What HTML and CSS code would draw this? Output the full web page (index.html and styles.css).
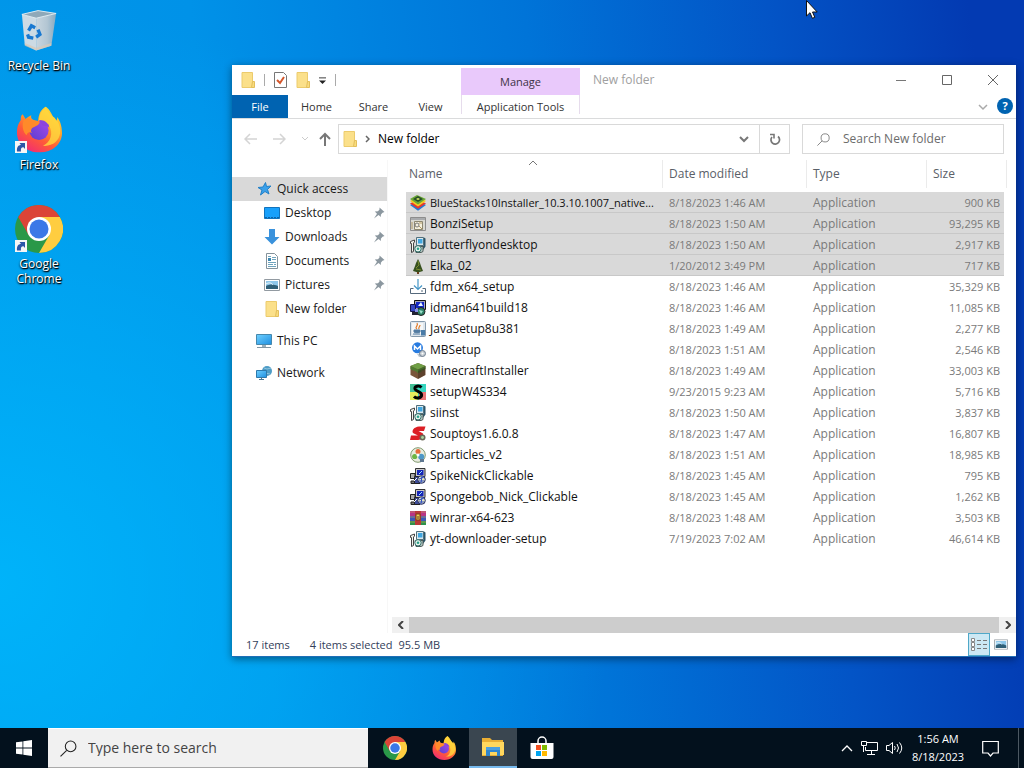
FILE: index.html
```html
<!DOCTYPE html>
<html lang="en">
<head>
<meta charset="utf-8">
<title>New folder</title>
<link rel="stylesheet" href="styles.css">
</head>
<body>
<svg class="sprite" aria-hidden="true">
  <linearGradient id="fx-body" x1="0.8" y1="0" x2="0.2" y2="1"><stop offset="0" stop-color="#ffe43a"/><stop offset=".35" stop-color="#ffa52c"/><stop offset=".65" stop-color="#ff5a38"/><stop offset="1" stop-color="#f0277a"/></linearGradient>
  <linearGradient id="fx-globe" x1="1" y1="0" x2="0" y2="1"><stop offset="0" stop-color="#a548ea"/><stop offset="1" stop-color="#5a3fd0"/></linearGradient>
  <linearGradient id="bin-side" x1="0" y1="0" x2="1" y2="0"><stop offset="0" stop-color="#c9d6df"/><stop offset=".55" stop-color="#b3c6d3"/><stop offset="1" stop-color="#86aac2"/></linearGradient>
  <linearGradient id="screen" x1="0" y1="0" x2="1" y2="1"><stop offset="0" stop-color="#6fd0ff"/><stop offset="1" stop-color="#1f8fe0"/></linearGradient>
  <symbol id="chrome" viewBox="0 0 48 48">
    <circle cx="24" cy="24" r="24" fill="#2a9848"/>
    <path d="M44.800 12H24v12l10.400 6L24 48A24 24 0 0 0 44.800 12Z" fill="#ffcd40"/>
    <path d="M3.200 12A24 24 0 0 1 44.800 12H24L13.600 30Z" fill="#db4437"/>
    <circle cx="24" cy="24" r="12" fill="#fff"/><circle cx="24" cy="24" r="9.500" fill="#3b78e7"/>
  </symbol>
  <symbol id="firefox" viewBox="0 0 48 48">
    <path d="M31 0c5 4 6 8 8 11 1 0 2 2 3 4 1-1 1-3 1-4 4 5 5 12 5 17 0 11-10 20-23 20C11 48 1 39 1 27c0-5 1-9 4-13 0-3 0-5 2-6l3 5c2-2 4-3 6-4-1 3 1 5 4 6h3c1-7 2-11 8-15Z" fill="url(#fx-body)"/>
    <path d="M31 1c-5 4-7 8-7 14 9 1 15 8 12 17-1 4-4 7-8 9 10 1 17-5 18-13 1-7-2-13-7-17-3-3-6-6-8-10Z" fill="#ffd83e" opacity=".8"/>
    <circle cx="24" cy="25" r="10" fill="url(#fx-globe)"/>
    <path d="M24 14c4 0 7 1 9 4 2 1 1 3 2 4-3-2-5-2-7-2Z" fill="#8b45dd"/>
    <path d="M8 14c5-3 8 0 15 1 2 0 2 2 1 3-2 3-7 3-8 6-1 2 0 3 1 4-3-2-5-1-6 2-4-4-5-10-3-16Z" fill="#ff8a2a"/>
  </symbol>
  <symbol id="shortcut" viewBox="0 0 12 12"><rect width="12" height="12" fill="#f6f6f6"/><path d="M2 10.500C1.500 6 3.500 4 6 4L4.500 2H10v6L8.500 6.200C6.500 6 5.500 7.500 6 10.500Z" fill="#2b56a8"/></symbol>
  <symbol id="folder" viewBox="0 0 14 16"><path d="M1 .5h10.500v15H1z" fill="#fbe08a" stroke="#eccb6c"/><path d="M11.500 9.500h2v6h-3z" fill="#f9dc7c" stroke="#e3bf5c"/></symbol>
  <symbol id="inno" viewBox="0 0 16 16"><path d="M6.500.500h7v8h-7z" fill="#dbe8ee" stroke="#52707c"/><path d="M8 2h4.500v4.500H8z" fill="#3fa6e0"/><path d="m14 .500 1.500 1v8L13 13V9l1-.500Z" fill="#2b5468"/><path d="M5 9.500h8v5l-2 1H6z" fill="#c2cfcc" stroke="#4d5d5b"/><path d="M.500 4.500 4.500 3v2l-1 1v8.500l-2 1v-9h-1Z" fill="#f4f4ee" stroke="#454545"/><circle cx="8" cy="11.800" r="3.200" fill="#e6f4ec" stroke="#2f6b68"/><circle cx="8" cy="11.800" r="1.300" fill="#29a18a"/></symbol>
  <symbol id="nick" viewBox="0 0 16 16"><path d="M5.500.500h9.500v8H5.500z" fill="#c8c8c8" stroke="#333"/><path d="M7 2h6.500v5H7z" fill="#1424b8"/><path d="m9 6 3-3" stroke="#9fe6ff"/><path d="M.500 5.500H5v5H.500z" fill="#aaa" stroke="#202020"/><path d="M1 13h5v2.500H1z" fill="#777" stroke="#202020"/><path d="M4.500 8.500H10v7H4.500z" fill="#3d4c97" stroke="#222"/><circle cx="11.500" cy="11.500" r="3.800" fill="#dfe2c0" stroke="#1c2562"/><path d="m9 11 5-2M11 15l1-7M9 13l5 0" stroke="#2c4ac0"/><path d="m4 13 3-3" stroke="#fff"/></symbol>
  <symbol id="bluestacks" viewBox="0 0 16 16"><path d="m0 10 8-4 8 4-8 5.800Z" fill="#247ad4"/><path d="m0 8.500 8-4 8 4-8 5.300Z" fill="#e5382f"/><path d="m0 6 8-4.500L16 6l-8 5.500Z" fill="#f6cc23"/><path d="m0 4 7-4 9 4-8 5.500Z" fill="#6aa834"/><path d="m3 4 5-3 5 3-5 3Z" fill="#284f28"/><path d="m6 4 2-1 2 1-2 1Z" fill="#e1ef6a"/></symbol>
  <symbol id="bonzi" viewBox="0 0 16 16"><path d="M.500 1.500h15v13H.500z" fill="#d9d9d2" stroke="#8d8d8d"/><path d="M1 2h14v2H1z" fill="#a9abad"/><path d="M4.500 5.500h8v8h-8z" fill="#f5f0dc" stroke="#8c8770"/><circle cx="7" cy="9" r="2" fill="none" stroke="#777"/><path d="m9 10 3 3M9 7h3M2 6v7" stroke="#b09a68"/></symbol>
  <symbol id="elka" viewBox="0 0 16 16"><path d="m8 1 2 4 1 3 2 5-5 1.500L3 13l2-5 1-3Z" fill="#37501f"/><path d="m8 3 1 4-3 3M6 11l5 1" stroke="#7c8c2f" fill="none"/><path d="M7 14h2v2H7z" fill="#6a3e1d"/></symbol>
  <symbol id="fdm" viewBox="0 0 16 16"><path d="M3.500 9.500h-3v5h15v-5h-3" fill="none" stroke="#55697c"/><path d="M8 0v10M4 6.500l4 4 4-4" fill="none" stroke="#4596c6" stroke-width="1.200"/><path d="M11 12h2" stroke="#55697c"/></symbol>
  <symbol id="idman" viewBox="0 0 16 16"><path d="M4.500.500h11v9h-11z" fill="#aab" stroke="#111"/><path d="M6 2h8v6H6z" fill="#1428c4"/><path d="m8 6 3-4 2 4Z" fill="#e8f4ff"/><path d="M.500 4.500h5v7h-5z" fill="#3748c0" stroke="#15154d"/><path d="M2 12h6v3H2z" fill="#223" /><circle cx="11" cy="11.500" r="4" fill="#2d7f66" stroke="#222"/><path d="m9 10 4 1-2 3Z" fill="#9ae0ca"/><path d="M5 9h3v3H5z" fill="#8890e8"/></symbol>
  <symbol id="java" viewBox="0 0 16 16"><rect x=".500" y=".500" width="15" height="15" rx="1" fill="#dfe6ec" stroke="#8499ac"/><path d="M2 2h11v11H2z" fill="#f5f7f8"/><path d="M7 8c-3-2 2-3 0-6M9 8c-1-2 1-2 1-4" fill="none" stroke="#e17926" stroke-width="1.200"/><path d="M4 9h6v2c0 1-6 1-6 0ZM3 13h7" fill="#527ba1" stroke="#527ba1"/><path d="M11 9h4v5.500h-4z" fill="#4a7ca8"/></symbol>
  <symbol id="mb" viewBox="0 0 16 16"><circle cx="7.500" cy="5.800" r="5.500" fill="#277be0"/><path d="M4.500 8V4l3 3 3-3v4" fill="none" stroke="#fff" stroke-width="1.500"/><path d="M7 12h6v3H9z" fill="#bec8d1"/><circle cx="12.500" cy="11.500" r="3" fill="#c5ccd2" stroke="#718092"/><circle cx="12.500" cy="11.500" r="1" fill="#fff"/></symbol>
  <symbol id="minecraft" viewBox="0 0 16 16"><path d="m8 0 7.500 3v9L8 16 .500 12V3Z" fill="#79553a"/><path d="m8 0 7.500 3L8 6.500.500 3Z" fill="#6f9f45"/><path d="M.500 3 8 6.500v4L6 8v1L4 7v1L.500 6Z" fill="#4f7c31"/><path d="M8 6.500 15.500 3v3l-2 1v1l-2-1v2L8 10Z" fill="#426a2b"/><path d="m8 8 7-3v7l-7 4Z" fill="#342319" opacity=".4"/></symbol>
  <symbol id="setup-s" viewBox="0 0 16 16"><path d="M0 0h16v16H0z" fill="#37d6c0"/><path d="M0 0h8v8H0z" fill="#43bf96"/><path d="M0 8h8v8H0z" fill="#e6ec5c"/><path d="M9 8h7v8H9z" fill="#eb7374"/><path d="M11.500 3.500C9 1 4.500 2 5 5c.500 2.500 6 2.500 6.500 5.500.5 3.500-5 4.500-7.500 2" fill="none" stroke="#000" stroke-width="3"/></symbol>
  <symbol id="soup" viewBox="0 0 16 16"><path d="M15.500.500H9C4 1 1.500 4.500 3 7l5 2.500H1L0 14h8c4 0 6-4 5-6.500L8.500 5H14Z" fill="#dc1f25"/><circle cx="12.500" cy="11.500" r="3" fill="#6b6758"/><circle cx="12.500" cy="11.500" r="1.400" fill="#a9d49d"/></symbol>
  <symbol id="spart" viewBox="0 0 16 16"><circle cx="8" cy="8" r="7.300" fill="#e8ecdf" stroke="#81996f"/><circle cx="8" cy="4.500" r="2.500" fill="#e76a39"/><circle cx="4.700" cy="9.500" r="2.600" fill="#6bb545"/><circle cx="11.200" cy="9.700" r="3" fill="#4d97c7"/><circle cx="8" cy="8" r="1.500" fill="#fff"/><path d="M10 12h4v3h-4z" fill="#5e7791"/></symbol>
  <symbol id="winrar" viewBox="0 0 16 16"><path d="M0 1h16v5H0z" fill="#b73586"/><path d="M0 6h16v5H0z" fill="#3c57b7"/><path d="M0 11h16v4H0z" fill="#2e914c"/><path d="M0 2h16M0 7h16M0 12h16" stroke="#d9a651" stroke-width=".600"/><path d="M5 1h6v14H5z" fill="#b93838"/><path d="M6 4h4v6H6z" fill="#efce53" stroke="#743e1d"/><path d="M8 6v3" stroke="#5f3f20"/></symbol>
  <symbol id="pin" viewBox="0 0 12 12"><path d="M6.500.500 11.500 5l-2 .700-1.700 2 .2 2.300L5.500 8 1 11.500 4 6.700 1.800 4.500 5 4.200l1.500-1.700Z" fill="#8b979f"/></symbol>
  <symbol id="picture" viewBox="0 0 16 12"><path d="M.500.500h15v11H.500z" fill="#fff" stroke="#929aa1"/><path d="M2 2h12v8H2z" fill="#8ec7ea"/><path d="M2 7c4-2 7-2 12 0v3H2z" fill="#2f5f77"/><path d="M2 5c3-2 6-1 7 1" stroke="#eef8fc" fill="none"/></symbol>
  <symbol id="lens" viewBox="0 0 16 16"><circle cx="10" cy="6" r="5" fill="none" stroke="currentColor"/><path d="M6.300 9.700.500 15.500" stroke="currentColor"/></symbol>
</svg>

<main class="desktop">
  <nav class="shortcuts" aria-label="Desktop">
    <a class="shortcut" href="#bin"><span class="shortcut-art"><svg class="bin" width="38" height="43" viewBox="0 0 40 44"><path d="m2 4 15 3v35L5 36Z" fill="#cddbe4"/><path d="M17 7 38 3l-5 34-16 5Z" fill="url(#bin-side)"/><path d="M2 4 19 0l19 3-21 5Z" fill="#8fa9b9" stroke="#e2ecf1"/><path d="m5 34 12 5v3L5 37ZM17 39l16-5v3l-16 5Z" fill="#d9c9b7" opacity=".7"/><g fill="none" stroke="#1979d1" stroke-width="3.500"><path d="m9 21 3-5 4 2M19 20l2 5-4 3M14 29l-5-1-1-3"/></g></svg></span><span>Recycle Bin</span></a>
    <a class="shortcut" href="#firefox"><span class="shortcut-art"><svg width="46" height="47" viewBox="0 0 48 48"><use href="#firefox"/></svg><svg class="badge" width="12" height="12"><use href="#shortcut"/></svg></span><span>Firefox</span></a>
    <a class="shortcut" href="#chrome"><span class="shortcut-art"><svg width="48" height="48"><use href="#chrome"/></svg><svg class="badge" width="12" height="12"><use href="#shortcut"/></svg></span><span>Google Chrome</span></a>
  </nav>

  <section class="window" aria-label="New folder">
    <header class="titlebar">
      <div class="quick">
        <svg width="14" height="16"><use href="#folder"/></svg><i class="bar"></i>
        <button aria-label="Properties"><svg width="13" height="16" viewBox="0 0 13 16"><path d="M.500.500h9l3 3v12H.500z" fill="#fff" stroke="#777"/><path d="m3 8 3 3 4-6" fill="none" stroke="#d4562b" stroke-width="2"/></svg></button>
        <button aria-label="New folder"><svg width="14" height="16"><use href="#folder"/></svg></button>
        <button aria-label="Customize toolbar"><svg width="7" height="7" viewBox="0 0 8 8"><path d="M0 1h8" stroke="#222"/><path d="M0 4h8L4 8Z" fill="#222"/></svg></button><i class="bar"></i>
      </div>
      <div class="context">Manage</div>
      <h1 class="title">New folder</h1>
      <div class="controls">
        <button aria-label="Minimize"><svg width="12" height="12" viewBox="0 0 12 12"><path d="M1 6.500h10" stroke="#777"/></svg></button>
        <button aria-label="Maximize"><svg width="12" height="12" viewBox="0 0 12 12"><path d="M1.500 1.500h9v9h-9z" fill="none" stroke="#666"/></svg></button>
        <button aria-label="Close"><svg width="12" height="12" viewBox="0 0 12 12"><path d="m1 1 10 10M11 1 1 11" stroke="#666"/></svg></button>
      </div>
    </header>
    <div class="tabs">
      <button class="tab tab-file">File</button><button class="tab">Home</button><button class="tab">Share</button><button class="tab">View</button><button class="tab tab-context">Application Tools</button>
      <span class="grow"></span>
      <button class="expand" aria-label="Expand ribbon"><svg width="10" height="8" viewBox="0 0 10 8"><path d="m1 2 4 4 4-4" fill="none" stroke="#aaa" stroke-width="1.500"/></svg></button>
      <button class="help">?</button>
    </div>
    <div class="nav">
      <div class="arrows">
        <button aria-label="Back"><svg width="13" height="12" viewBox="0 0 13 12"><path d="M13 6H1m5-5L1 6l5 5" fill="none" stroke="#d4d4d4" stroke-width="1.500"/></svg></button>
        <button aria-label="Forward"><svg width="13" height="12" viewBox="0 0 13 12"><path d="M0 6h12M7 1l5 5-5 5" fill="none" stroke="#d4d4d4" stroke-width="1.500"/></svg></button>
        <button aria-label="Recent"><svg width="6" height="4" viewBox="0 0 6 4"><path d="m0 0 3 3 3-3" fill="none" stroke="#ccc"/></svg></button>
        <button aria-label="Up"><svg width="12" height="14" viewBox="0 0 12 14"><path d="M6 14V2M1 7l5-5 5 5" fill="none" stroke="#777" stroke-width="2"/></svg></button>
      </div>
      <div class="address">
        <svg width="14" height="16"><use href="#folder"/></svg>
        <svg width="5" height="8" viewBox="0 0 5 8"><path d="m1 1 3 3-3 3" fill="none" stroke="#666" stroke-width="1.500"/></svg>
        <span class="grow">New folder</span>
        <button class="drop" aria-label="History"><svg width="10" height="8" viewBox="0 0 10 8"><path d="m1 2 4 4 4-4" fill="none" stroke="#777" stroke-width="2"/></svg></button>
        <button class="refresh" aria-label="Refresh"><svg width="12" height="13" viewBox="0 0 12 13"><path d="M9 3.500A4.300 4.300 0 1 1 3 4" fill="none" stroke="#777" stroke-width="1.700"/><path d="M1 1.500h4v4" fill="none" stroke="#777" stroke-width="1.600"/></svg></button>
      </div>
      <label class="find"><svg width="13" height="13"><use href="#lens"/></svg><input type="search" placeholder="Search New folder" aria-label="Search New folder"></label>
    </div>
    <div class="body">
      <nav class="side" aria-label="Folders">
        <a class="place top current" href="#quick"><svg width="16" height="16" viewBox="0 0 16 16"><path d="m9.500 1.500 1 4 4.500-.500-3.500 3.500 1.500 4.500-4-2.500-4.500 3.500 1.500-5L2 6.500l5-.500Z" fill="#3aa0ea" stroke="#2180c8"/></svg>Quick access</a>
        <a class="place" href="#desktop"><svg width="16" height="12" viewBox="0 0 16 12"><path d="M.500.500h15v11H.500z" fill="#18a0fb" stroke="#1173bd"/><path d="M1 10.500h14" stroke="#0b64aa" stroke-dasharray="2 1"/></svg>Desktop<svg class="pin" width="12" height="12"><use href="#pin"/></svg></a>
        <a class="place" href="#downloads"><svg width="16" height="16" viewBox="0 0 16 16"><path d="M5 0h6v8h4.500L8 15.500.500 8H5Z" fill="#3a92dc"/></svg>Downloads<svg class="pin" width="12" height="12"><use href="#pin"/></svg></a>
        <a class="place" href="#documents"><svg width="16" height="16" viewBox="0 0 16 16"><path d="M2.500.500h8l3 3v12h-11z" fill="#fff" stroke="#84929b"/><path d="M8 4.500h4M8 6.500h4M4 9.500h8M4 11.500h5M10 11.500h2M4 13.500h8M4 3.500h3" stroke="#6fa4bd"/><path d="M4 5h3v3H4z" fill="#3b87b3"/></svg>Documents<svg class="pin" width="12" height="12"><use href="#pin"/></svg></a>
        <a class="place" href="#pictures"><svg width="16" height="12"><use href="#picture"/></svg>Pictures<svg class="pin" width="12" height="12"><use href="#pin"/></svg></a>
        <a class="place" href="#folder"><svg width="16" height="16"><use href="#folder"/></svg>New folder</a>
        <a class="place top apart" href="#pc"><svg width="16" height="16" viewBox="0 0 16 16"><path d="M.500 1.500h15v10H.500z" fill="url(#screen)" stroke="#4688ad"/><path d="M6 12h4v2H6z" fill="#9bafbb"/><path d="M1 14.500h14" stroke="#8297a3"/></svg>This PC</a>
        <a class="place top apart" href="#network"><svg width="16" height="16" viewBox="0 0 16 16"><circle cx="11" cy="6" r="5" fill="#4e9cc6"/><path d="m8 3 3 1 4-1M9 8l5 1" stroke="#8fc4de" fill="none"/><path d="M.500 5.500h10v7H.500z" fill="url(#screen)" stroke="#2d79ac"/><path d="M3 14.500h5M5.500 12v2" stroke="#4a7894"/></svg>Network</a>
      </nav>
      <div class="content">
        <svg class="sort" width="10" height="6" viewBox="0 0 10 6"><path d="m1 5 4-4 4 4" fill="none" stroke="#777"/></svg>
        <table class="files">
          <colgroup><col><col class="c-date"><col class="c-type"><col class="c-size"></colgroup>
          <thead><tr><th>Name</th><th>Date modified</th><th>Type</th><th>Size</th></tr></thead>
          <tbody>
            <tr class="picked"><td><span class="name small"><svg><use href="#bluestacks"/></svg>BlueStacks10Installer_10.3.10.1007_native...</span></td><td>8/18/2023 1:46 AM</td><td>Application</td><td>900 KB</td></tr>
            <tr class="picked"><td><span class="name"><svg><use href="#bonzi"/></svg>BonziSetup</span></td><td>8/18/2023 1:50 AM</td><td>Application</td><td>93,295 KB</td></tr>
            <tr class="picked"><td><span class="name"><svg><use href="#inno"/></svg>butterflyondesktop</span></td><td>8/18/2023 1:50 AM</td><td>Application</td><td>2,917 KB</td></tr>
            <tr class="picked"><td><span class="name"><svg><use href="#elka"/></svg>Elka_02</span></td><td>1/20/2012 3:49 PM</td><td>Application</td><td>717 KB</td></tr>
            <tr><td><span class="name"><svg><use href="#fdm"/></svg>fdm_x64_setup</span></td><td>8/18/2023 1:46 AM</td><td>Application</td><td>35,329 KB</td></tr>
            <tr><td><span class="name"><svg><use href="#idman"/></svg>idman641build18</span></td><td>8/18/2023 1:46 AM</td><td>Application</td><td>11,085 KB</td></tr>
            <tr><td><span class="name"><svg><use href="#java"/></svg>JavaSetup8u381</span></td><td>8/18/2023 1:49 AM</td><td>Application</td><td>2,277 KB</td></tr>
            <tr><td><span class="name"><svg><use href="#mb"/></svg>MBSetup</span></td><td>8/18/2023 1:51 AM</td><td>Application</td><td>2,546 KB</td></tr>
            <tr><td><span class="name"><svg><use href="#minecraft"/></svg>MinecraftInstaller</span></td><td>8/18/2023 1:49 AM</td><td>Application</td><td>33,003 KB</td></tr>
            <tr><td><span class="name"><svg><use href="#setup-s"/></svg>setupW4S334</span></td><td>9/23/2015 9:23 AM</td><td>Application</td><td>5,716 KB</td></tr>
            <tr><td><span class="name"><svg><use href="#inno"/></svg>siinst</span></td><td>8/18/2023 1:50 AM</td><td>Application</td><td>3,837 KB</td></tr>
            <tr><td><span class="name"><svg><use href="#soup"/></svg>Souptoys1.6.0.8</span></td><td>8/18/2023 1:47 AM</td><td>Application</td><td>16,807 KB</td></tr>
            <tr><td><span class="name"><svg><use href="#spart"/></svg>Sparticles_v2</span></td><td>8/18/2023 1:51 AM</td><td>Application</td><td>18,985 KB</td></tr>
            <tr><td><span class="name"><svg><use href="#nick"/></svg>SpikeNickClickable</span></td><td>8/18/2023 1:45 AM</td><td>Application</td><td>795 KB</td></tr>
            <tr><td><span class="name"><svg><use href="#nick"/></svg>Spongebob_Nick_Clickable</span></td><td>8/18/2023 1:45 AM</td><td>Application</td><td>1,262 KB</td></tr>
            <tr><td><span class="name"><svg><use href="#winrar"/></svg>winrar-x64-623</span></td><td>8/18/2023 1:48 AM</td><td>Application</td><td>3,503 KB</td></tr>
            <tr><td><span class="name"><svg><use href="#inno"/></svg>yt-downloader-setup</span></td><td>7/19/2023 7:02 AM</td><td>Application</td><td>46,614 KB</td></tr>
          </tbody>
        </table>
        <div class="scroll">
          <button aria-label="Scroll left"><svg width="6" height="8" viewBox="0 0 6 8"><path d="M5 0 1 4l4 4" fill="none" stroke="#444" stroke-width="2"/></svg></button>
          <span class="thumb"></span>
          <button aria-label="Scroll right"><svg width="6" height="8" viewBox="0 0 6 8"><path d="m1 0 4 4-4 4" fill="none" stroke="#444" stroke-width="2"/></svg></button>
        </div>
      </div>
    </div>
    <footer class="status">
      <span class="count">17 items</span><span>4 items selected</span><span>95.5 MB</span><span class="grow"></span>
      <div class="views">
        <button class="view on" aria-label="Details"><svg width="16" height="13" viewBox="0 0 16 13"><path d="M.500.500h3v3h-3zM.500 4.500h3v4h-3zM.500 9.500h3v3h-3z" fill="#fff" stroke="#888"/><path d="M6 2.500h10M6 6.500h10M6 10.500h10" stroke="#777" stroke-dasharray="4 2"/></svg></button>
        <button class="view" aria-label="Large icons"><svg width="14" height="11" viewBox="0 0 16 12"><use href="#picture"/></svg></button>
      </div>
    </footer>
  </section>
  <svg class="cursor" width="12" height="19" viewBox="0 0 12 19"><path d="M.500.500v15.500L4 12.700l2.400 5.600 2.400-1L6.500 12h4.700Z" fill="#fff" stroke="#111"/></svg>
</main>

<footer class="taskbar">
  <button class="task" aria-label="Start"><svg width="16" height="16" viewBox="0 0 16 16" fill="#fff"><path d="m0 2.300 6.500-.900v6.200H0zM7.300 1.300 16 0v7.600H7.300zM0 8.400h6.500v6.200L0 13.700zM7.300 8.400H16V16l-8.700-1.200z"/></svg></button>
  <label class="task-search"><svg width="17" height="17" viewBox="0 0 16 16"><use href="#lens"/></svg><input type="search" placeholder="Type here to search" aria-label="Type here to search"></label>
  <div class="apps">
    <button class="task" aria-label="Google Chrome"><svg width="24" height="24"><use href="#chrome"/></svg></button>
    <button class="task" aria-label="Firefox"><svg width="24" height="24"><use href="#firefox"/></svg></button>
    <button class="task active" aria-label="File Explorer"><svg width="22" height="20" viewBox="0 0 22 20"><path d="M0 1h8l2 2h11v16H0z" fill="#e9ae34"/><path d="M0 5h22v13H0z" fill="#ffd75e"/><path d="M4 10h14v9h-3v-4H8v4H4z" fill="#2f86cf"/><path d="M4 10h14v3H4z" fill="#4b9fdf"/></svg></button>
    <button class="task" aria-label="Microsoft Store"><svg width="24" height="24" viewBox="0 0 24 24"><path d="M8 7V5a4 4 0 0 1 8 0v2" fill="none" stroke="#fff" stroke-width="1.500"/><path d="M.500 7h23v14a2 2 0 0 1-2 2h-19a2 2 0 0 1-2-2z" fill="#fff"/><path d="M6 9h5v5H6z" fill="#f25022"/><path d="M12 9h5v5h-5z" fill="#7fba00"/><path d="M6 15h5v5H6z" fill="#00a4ef"/><path d="M12 15h5v5h-5z" fill="#ffb900"/></svg></button>
  </div>
  <span class="grow"></span>
  <div class="tray">
    <button aria-label="Show hidden icons"><svg width="12" height="8" viewBox="0 0 12 8"><path d="m1 7 5-5 5 5" fill="none" stroke="#fff" stroke-width="1.300"/></svg></button>
    <button aria-label="Network"><svg width="17" height="14" viewBox="0 0 17 14" fill="none" stroke="#fff"><path d="M6 1.500h10.500v8H4.500V6"/><path d="M.500.500h5v4h-5zM2.500 5v6M10.500 10v3M6 13.500h8"/></svg></button>
    <button aria-label="Volume"><svg width="17" height="14" viewBox="0 0 17 14" fill="none" stroke="#fff"><path d="M.500 4.500h2.500l3.500-3v11L3 9.500H.500z"/><path d="M8.500 5q1.500 2 0 4M11 3q3 4 0 8M13.500 1.500q4.500 5.500 0 11"/></svg></button>
  </div>
  <button class="clock"><time>1:56 AM</time><time>8/18/2023</time></button>
  <button class="notes" aria-label="Notifications"><svg width="17" height="17" viewBox="0 0 17 17"><path d="M.700 1.500h15.600v11.500H11l-2.500 3L6 13H.700z" fill="none" stroke="#fff" stroke-width="1.200"/></svg></button>
  <button class="peek" aria-label="Show desktop"></button>
</footer>
</body>
</html>
```
FILE: styles.css
```css
* { box-sizing: border-box; }
body {
  margin: 0;
  min-height: 100vh;
  display: flex;
  flex-direction: column;
  font: 12px/16px "Open Sans", "Noto Sans", sans-serif;
  color: #1a1a1a;
  background: #0078d7;
}
button { margin: 0; padding: 0; border: 0; background: none; font: inherit; color: inherit; display: flex; align-items: center; justify-content: center; }
a { color: inherit; text-decoration: none; }
input { min-width: 0; flex: 1; padding: 0; border: 0; outline: 0; background: none; font: inherit; color: inherit; }
input::placeholder { color: inherit; opacity: 1; }
svg { flex: none; display: block; }
.sprite { position: absolute; width: 0; height: 0; }
.grow { flex: 1; }
.small { font-size: 11px; }

.desktop {
  position: relative;
  flex: 1;
  background:
    radial-gradient(ellipse 60% 80% at 0% 80%, rgba(0, 188, 255, 0.75), rgba(0, 170, 255, 0) 100%),
    linear-gradient(83deg, #0098ea 0%, #0092e8 25%, #0074d8 55%, #0354c6 77%, #033ab2 95%);
}
.shortcuts { width: 78px; padding-top: 7px; display: grid; grid-auto-rows: 99px; }
.shortcut { display: flex; flex-direction: column; align-items: center; text-align: center; line-height: 15px; color: #fff; text-shadow: 0 1px 2px #000, 1px 1px 1px #000; }
.shortcut-art { position: relative; width: 48px; height: 51px; display: flex; align-items: start; justify-content: center; }
.bin { margin-top: 3px; }
.badge { position: absolute; left: 0; bottom: 4px; }

.window {
  position: absolute;
  left: 232px;
  right: 8px;
  top: 65px;
  bottom: 71px;
  display: flex;
  flex-direction: column;
  background: #fff;
  border: 1px solid #1f6fb8;
  border-width: 0 0 1px;
  box-shadow: 0 2px 8px rgba(0, 0, 0, 0.45);
}
.titlebar { display: flex; height: 30px; align-items: center; }
.quick { width: 229px; padding-left: 9px; display: flex; align-items: center; gap: 9px; }
.bar { width: 1px; height: 12px; background: #aaa; }
.context { width: 119px; align-self: end; height: 27px; display: grid; place-items: center; background: #e9c9fb; color: #3d3346; font-size: 11px; }
.title { flex: 1; margin: 0; padding-left: 13px; font-size: 12px; font-weight: 400; color: #a0a0a0; }
.controls { display: flex; align-self: stretch; }
.controls button { width: 46px; }
.tabs { display: flex; height: 24px; border-bottom: 1px solid #dadbdc; color: #333; font-size: 11px; }
.tab { width: 57px; }
.tab-file { width: 56px; background: #0063b1; color: #fff; }
.tab-context { width: 119px; margin: 0 0 4px 2px; padding-top: 4px; border: 1px solid #e6dcec; border-width: 0 1px; }
.expand { width: 24px; }
.help { width: 16px; height: 16px; margin: 3px 3px 0 2px; border-radius: 50%; background: #0063b1; color: #fff; font-weight: 700; }
.nav { display: flex; align-items: center; padding: 5px 12px 6px; }
.arrows { width: 94px; display: flex; align-items: center; gap: 16px; }
.arrows button:last-child { margin-left: -5px; }
.address { flex: 1; height: 30px; padding-left: 4px; display: flex; align-items: center; gap: 8px; border: 1px solid #d9d9d9; color: #000; }
.drop { width: 14px; }
.refresh { width: 30px; align-self: stretch; border-left: 1px solid #d9d9d9; }
.find { width: 202px; height: 30px; margin-left: 12px; padding-left: 14px; display: flex; align-items: center; gap: 13px; border: 1px solid #d9d9d9; color: #6c6c6c; }
.body { flex: 1; display: flex; min-height: 0; }
.side { width: 156px; padding-top: 17px; border-right: 1px solid #f7f7f7; }
.place { height: 24px; padding: 0 2px 0 32px; display: flex; align-items: center; gap: 5px; }
.place.top { padding-left: 24px; }
.place.current { background: #d9d9d9; }
.place.apart { margin-top: 8px; }
.pin { margin-left: auto; }
.content { position: relative; flex: 1; padding-left: 4px; display: flex; flex-direction: column; justify-content: space-between; }
.sort { position: absolute; left: 140px; top: 0; }
.files { width: calc(100% - 23px); margin-left: 14px; table-layout: fixed; border-collapse: separate; border-spacing: 0; }
.c-date { width: 144px; }
.c-type { width: 120px; }
.c-size { width: 80px; }
.files th { height: 32px; padding: 0 6px 4px; text-align: left; font-weight: 400; color: #5a6068; background: linear-gradient(#ebebeb, #ebebeb) right top / 1px 28px no-repeat; }
.files th:first-child { padding-left: 3px; }
.files td { height: 21px; padding: 0 6px; color: #7a7a7a; white-space: nowrap; }
.files td:first-child { padding-left: 4px; color: #111; }
.files td:nth-child(2) { font-size: 11px; }
.files td:last-child { padding-right: 4px; font-size: 11px; text-align: right; border-right: 3px solid transparent; background-clip: padding-box; }
.picked td { background-color: #d9d9d9; box-shadow: inset 0 -1px #c8c8c8; }
.name { display: flex; align-items: center; gap: 4px; }
.name svg { width: 16px; height: 16px; }
.scroll { display: flex; height: 16px; background: #f0f0f0; }
.scroll button { width: 17px; }
.thumb { flex: 1; background: #cdcdcd; }
.status { display: flex; align-items: center; height: 23px; padding: 0 8px 0 14px; gap: 6px; color: #33405a; font-size: 11px; }
.count { margin-right: 14px; }
.views { display: flex; gap: 4px; }
.view { height: 23px; }
.view.on { width: 22px; background: #cce8f4; border: 1px solid #4fa8c8; }
.cursor { position: absolute; left: 806px; top: 0; }

.taskbar { display: flex; height: 40px; background: #03111d; color: #fff; }
.task { width: 48px; }
.task-search { width: 320px; padding-left: 12px; display: flex; align-items: center; gap: 11px; background: #f1f1f1; color: #444; font-size: 14px; border-top: 1px solid #fff; border-bottom: 1px solid #aaa; }
.task-search svg { color: #222; }
.apps { display: flex; gap: 1px; padding-left: 3px; }
.active { background: #3a4650; border-bottom: 2px solid #76b9ed; }
.tray { display: flex; gap: 8px; padding-right: 4px; }
.clock { width: 62px; flex-direction: column; line-height: 18px; font-size: 11px; }
.notes { width: 42px; }
.peek { width: 6px; margin-left: 7px; border-left: 1px solid #4c5862; }
```
